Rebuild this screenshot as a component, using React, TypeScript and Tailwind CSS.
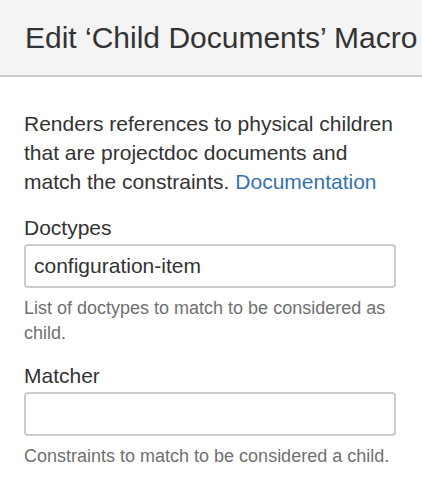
export default function App() {
  return (
    <div className="h-[480px] w-[422px] overflow-hidden bg-white font-['Liberation_Sans',Arial,sans-serif] text-[#333]">
      <div className="flex h-[77px] items-center overflow-hidden whitespace-nowrap border-b-2 border-[#ccc] bg-[#f4f4f4] pl-[25px]">
        <h1 className="text-[30px] leading-none">Edit ‘Child Documents’ Macro</h1>
      </div>
      <div className="px-[24px] pt-[32px]">
        <p className="text-[21px] leading-[29px]">
          Renders references to physical children that are projectdoc documents and match the constraints.{' '}
          <a className="text-[#3572b0]" href="#">Documentation</a>
        </p>
        <div className="mt-[18px]">
          <label className="block text-[21px] leading-[28px]">Doctypes</label>
          <input
            className="mt-[2px] h-[44px] w-[372px] rounded-[4px] border-2 border-[#ccc] px-[8px] text-[21px] text-[#333] outline-none"
            defaultValue="configuration-item"
          />
          <div className="mt-[8px] text-[18px] leading-[25px] text-[#707070]">
            List of doctypes to match to be considered as child.
          </div>
        </div>
        <div className="mt-[16px]">
          <label className="block text-[21px] leading-[28px]">Matcher</label>
          <input
            className="mt-[2px] h-[44px] w-[372px] rounded-[4px] border-2 border-[#ccc] px-[8px] text-[21px] text-[#333] outline-none"
            defaultValue=""
          />
          <div className="mt-[8px] text-[18px] leading-[25px] text-[#707070]">
            Constraints to match to be considered a child.
          </div>
        </div>
      </div>
    </div>
  )
}
